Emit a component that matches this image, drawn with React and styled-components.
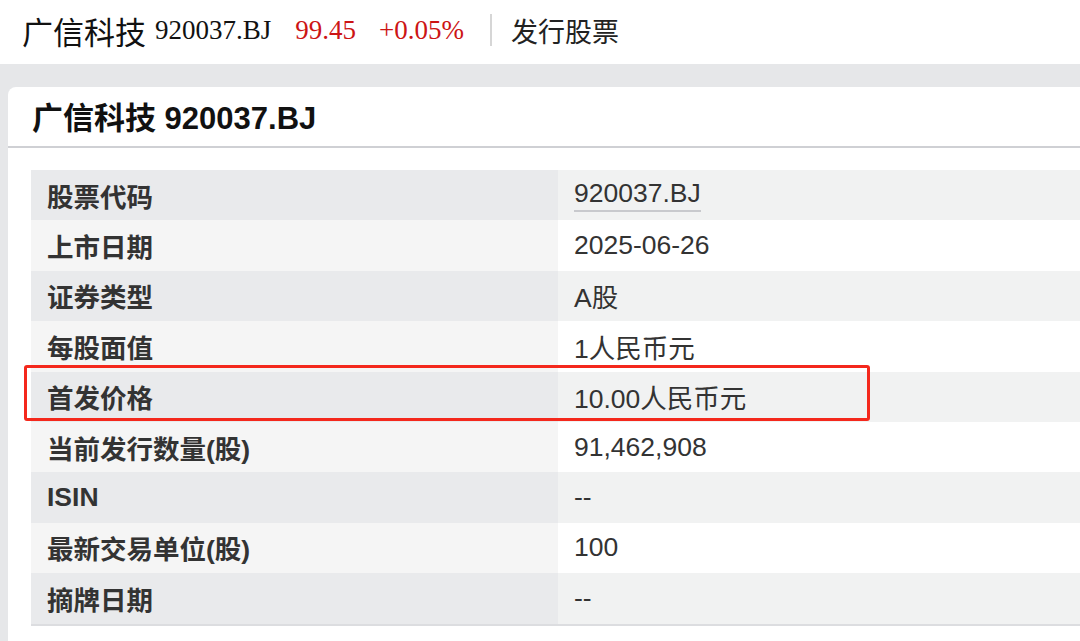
import React from 'react';
import styled, { createGlobalStyle } from 'styled-components';

const GlobalStyle = createGlobalStyle`
  html, body {
    margin: 0;
    padding: 0;
    background: #e6e7e9;
    overflow: hidden;
  }
  body {
    font-family: "Liberation Sans", "Noto Sans CJK SC", sans-serif;
    color: #333;
  }
`;

const Page = styled.div`
  width: 1080px;
  height: 641px;
  overflow: hidden;
`;

const TopBar = styled.div`
  height: 64px;
  box-sizing: border-box;
  background: #fff;
  display: flex;
  align-items: center;
  padding: 0 0 4px 22px;
  font-family: "Liberation Serif", "Noto Sans CJK SC", serif;
  color: #111;
`;

const Ticker = styled.span`
  font-size: 31px;
  margin-right: 9px;
`;

const Code = styled.span`
  font-size: 27px;
`;

const Quote = styled.span`
  font-size: 27px;
  color: #cc1414;
  margin-left: ${(p) => p.$gap}px;
`;

const Divider = styled.div`
  width: 2px;
  height: 32px;
  background: #d6d6d6;
  margin: 0 19px 0 26px;
`;

const Section = styled.span`
  font-size: 27px;
  color: #222;
`;

const Card = styled.div`
  margin: 23px 0 0 8px;
  width: 1100px;
  background: #fff;
  border-radius: 8px 0 0 0;
  padding-bottom: 30px;
`;

const CardHeader = styled.div`
  height: 61px;
  box-sizing: border-box;
  display: flex;
  align-items: center;
  padding: 0 0 2px 24px;
  border-bottom: 2px solid #cfd0d4;
  font-size: 31px;
  font-weight: 700;
  color: #111;
`;

const TableWrap = styled.div`
  position: relative;
  margin: 22px 0 0 23px;
  border-bottom: 2px solid #dcdde0;
`;

const Row = styled.div`
  display: grid;
  grid-template-columns: 527px 1fr;
  height: 50.4px;
`;

const Label = styled.div`
  display: flex;
  align-items: center;
  padding-left: 16px;
  font-size: 26.5px;
  font-weight: 700;
  color: #333;
  background: ${(p) => (p.$odd ? '#e9eaec' : '#f5f5f5')};
`;

const Value = styled.div`
  display: flex;
  align-items: center;
  padding-left: 16px;
  font-size: 26.5px;
  color: #333;
  background: ${(p) => (p.$odd ? '#f1f2f2' : '#ffffff')};
`;

const Linked = styled.span`
  line-height: 1.2;
  border-bottom: 2px solid #c8c9cd;
`;

const Highlight = styled.div`
  position: absolute;
  left: -7px;
  top: 195px;
  width: 840px;
  height: 50px;
  border: 3px solid #f4281c;
  border-radius: 3px;
  pointer-events: none;
`;

const rows = [
  ['股票代码', '920037.BJ', true],
  ['上市日期', '2025-06-26'],
  ['证券类型', 'A股'],
  ['每股面值', '1人民币元'],
  ['首发价格', '10.00人民币元'],
  ['当前发行数量(股)', '91,462,908'],
  ['ISIN', '--'],
  ['最新交易单位(股)', '100'],
  ['摘牌日期', '--'],
];

export default function App() {
  return (
    <Page>
      <GlobalStyle />
      <TopBar>
        <Ticker>广信科技</Ticker>
        <Code>920037.BJ</Code>
        <Quote $gap={24}>99.45</Quote>
        <Quote $gap={23}>+0.05%</Quote>
        <Divider />
        <Section>发行股票</Section>
      </TopBar>
      <Card>
        <CardHeader>广信科技 920037.BJ</CardHeader>
        <TableWrap>
          {rows.map(([label, value, link], i) => (
            <Row key={label}>
              <Label $odd={i % 2 === 0}>{label}</Label>
              <Value $odd={i % 2 === 0}>
                {link ? <Linked>{value}</Linked> : value}
              </Value>
            </Row>
          ))}
          <Highlight />
        </TableWrap>
      </Card>
    </Page>
  );
}
